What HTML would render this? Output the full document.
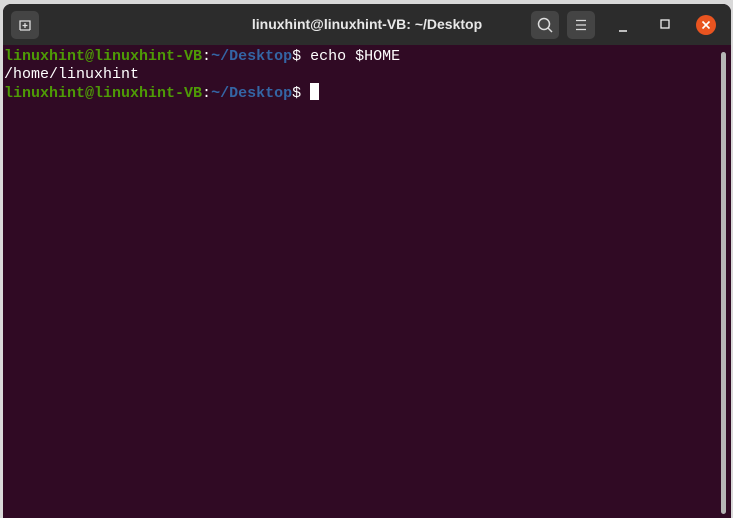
<!DOCTYPE html>
<html><head><style>
body{margin:0;width:733px;height:518px;background:#d9d9d9;overflow:hidden;position:relative;font-family:"Liberation Sans",sans-serif}
.win{position:absolute;left:3px;top:4px;width:728px;height:514px;background:#300a24;border-radius:8px 8px 0 0;overflow:hidden}
.tb{height:41px;background:#2c2c2c;position:relative}
.btn{position:absolute;top:7px;width:28px;height:28px;background:#444;border-radius:5px}
.title{position:absolute;left:0;right:0;top:12px;text-align:center;color:#e8e8e8;font-weight:bold;font-size:14px}
pre{margin:0;position:absolute;left:1px;top:44px;font-family:"Liberation Mono",monospace;font-size:15px;line-height:17.5px;color:#fff}
.g{color:#4e9a06;font-weight:bold}.b{color:#3465a4;font-weight:bold}
.cur{display:inline-block;width:9px;height:17px;background:#fff;vertical-align:-3px}
.sb{position:absolute;left:718px;top:48px;width:5px;height:462px;background:#b5b5b5;border-radius:3px}
</style></head><body>
<div class="win">
<div class="tb">
<div class="btn" style="left:8px"><svg width="28" height="28"><path d="M9 19V10h10v9M9 19h10" stroke="#ddd" fill="none" stroke-width="1.3"/><path d="M14 12v5M11.5 14.5h5" stroke="#ddd" stroke-width="1.3"/></svg></div>
<div class="title">linuxhint@linuxhint-VB: ~/Desktop</div>
<div class="btn" style="left:528px"><svg width="28" height="28"><circle cx="13" cy="13" r="5.5" stroke="#ddd" fill="none" stroke-width="1.5"/><path d="M17 17l4 4" stroke="#ddd" stroke-width="1.5"/></svg></div>
<div class="btn" style="left:564px"><svg width="28" height="28"><path d="M9 9.5h10M9 14h10M9 18.5h10" stroke="#ddd" stroke-width="1.3"/></svg></div>
<svg style="position:absolute;left:615px;top:16px" width="12" height="12"><path d="M1 11h8" stroke="#eee" stroke-width="1.5"/></svg>
<svg style="position:absolute;left:657px;top:15px" width="12" height="12"><rect x="1" y="1" width="8" height="8" stroke="#eee" fill="none" stroke-width="1.3"/></svg>
<div style="position:absolute;left:693px;top:11px;width:20px;height:20px;border-radius:50%;background:#e95420"><svg width="20" height="20"><path d="M6.5 6.5l7 7M13.5 6.5l-7 7" stroke="#fff" stroke-width="1.6"/></svg></div>
</div>
<pre><span class="g">linuxhint@linuxhint-VB</span>:<span class="b">~/Desktop</span>$ echo $HOME
/home/linuxhint
<span class="g">linuxhint@linuxhint-VB</span>:<span class="b">~/Desktop</span>$ <span class="cur"></span></pre>
<div class="sb"></div>
</div>
</body></html>
